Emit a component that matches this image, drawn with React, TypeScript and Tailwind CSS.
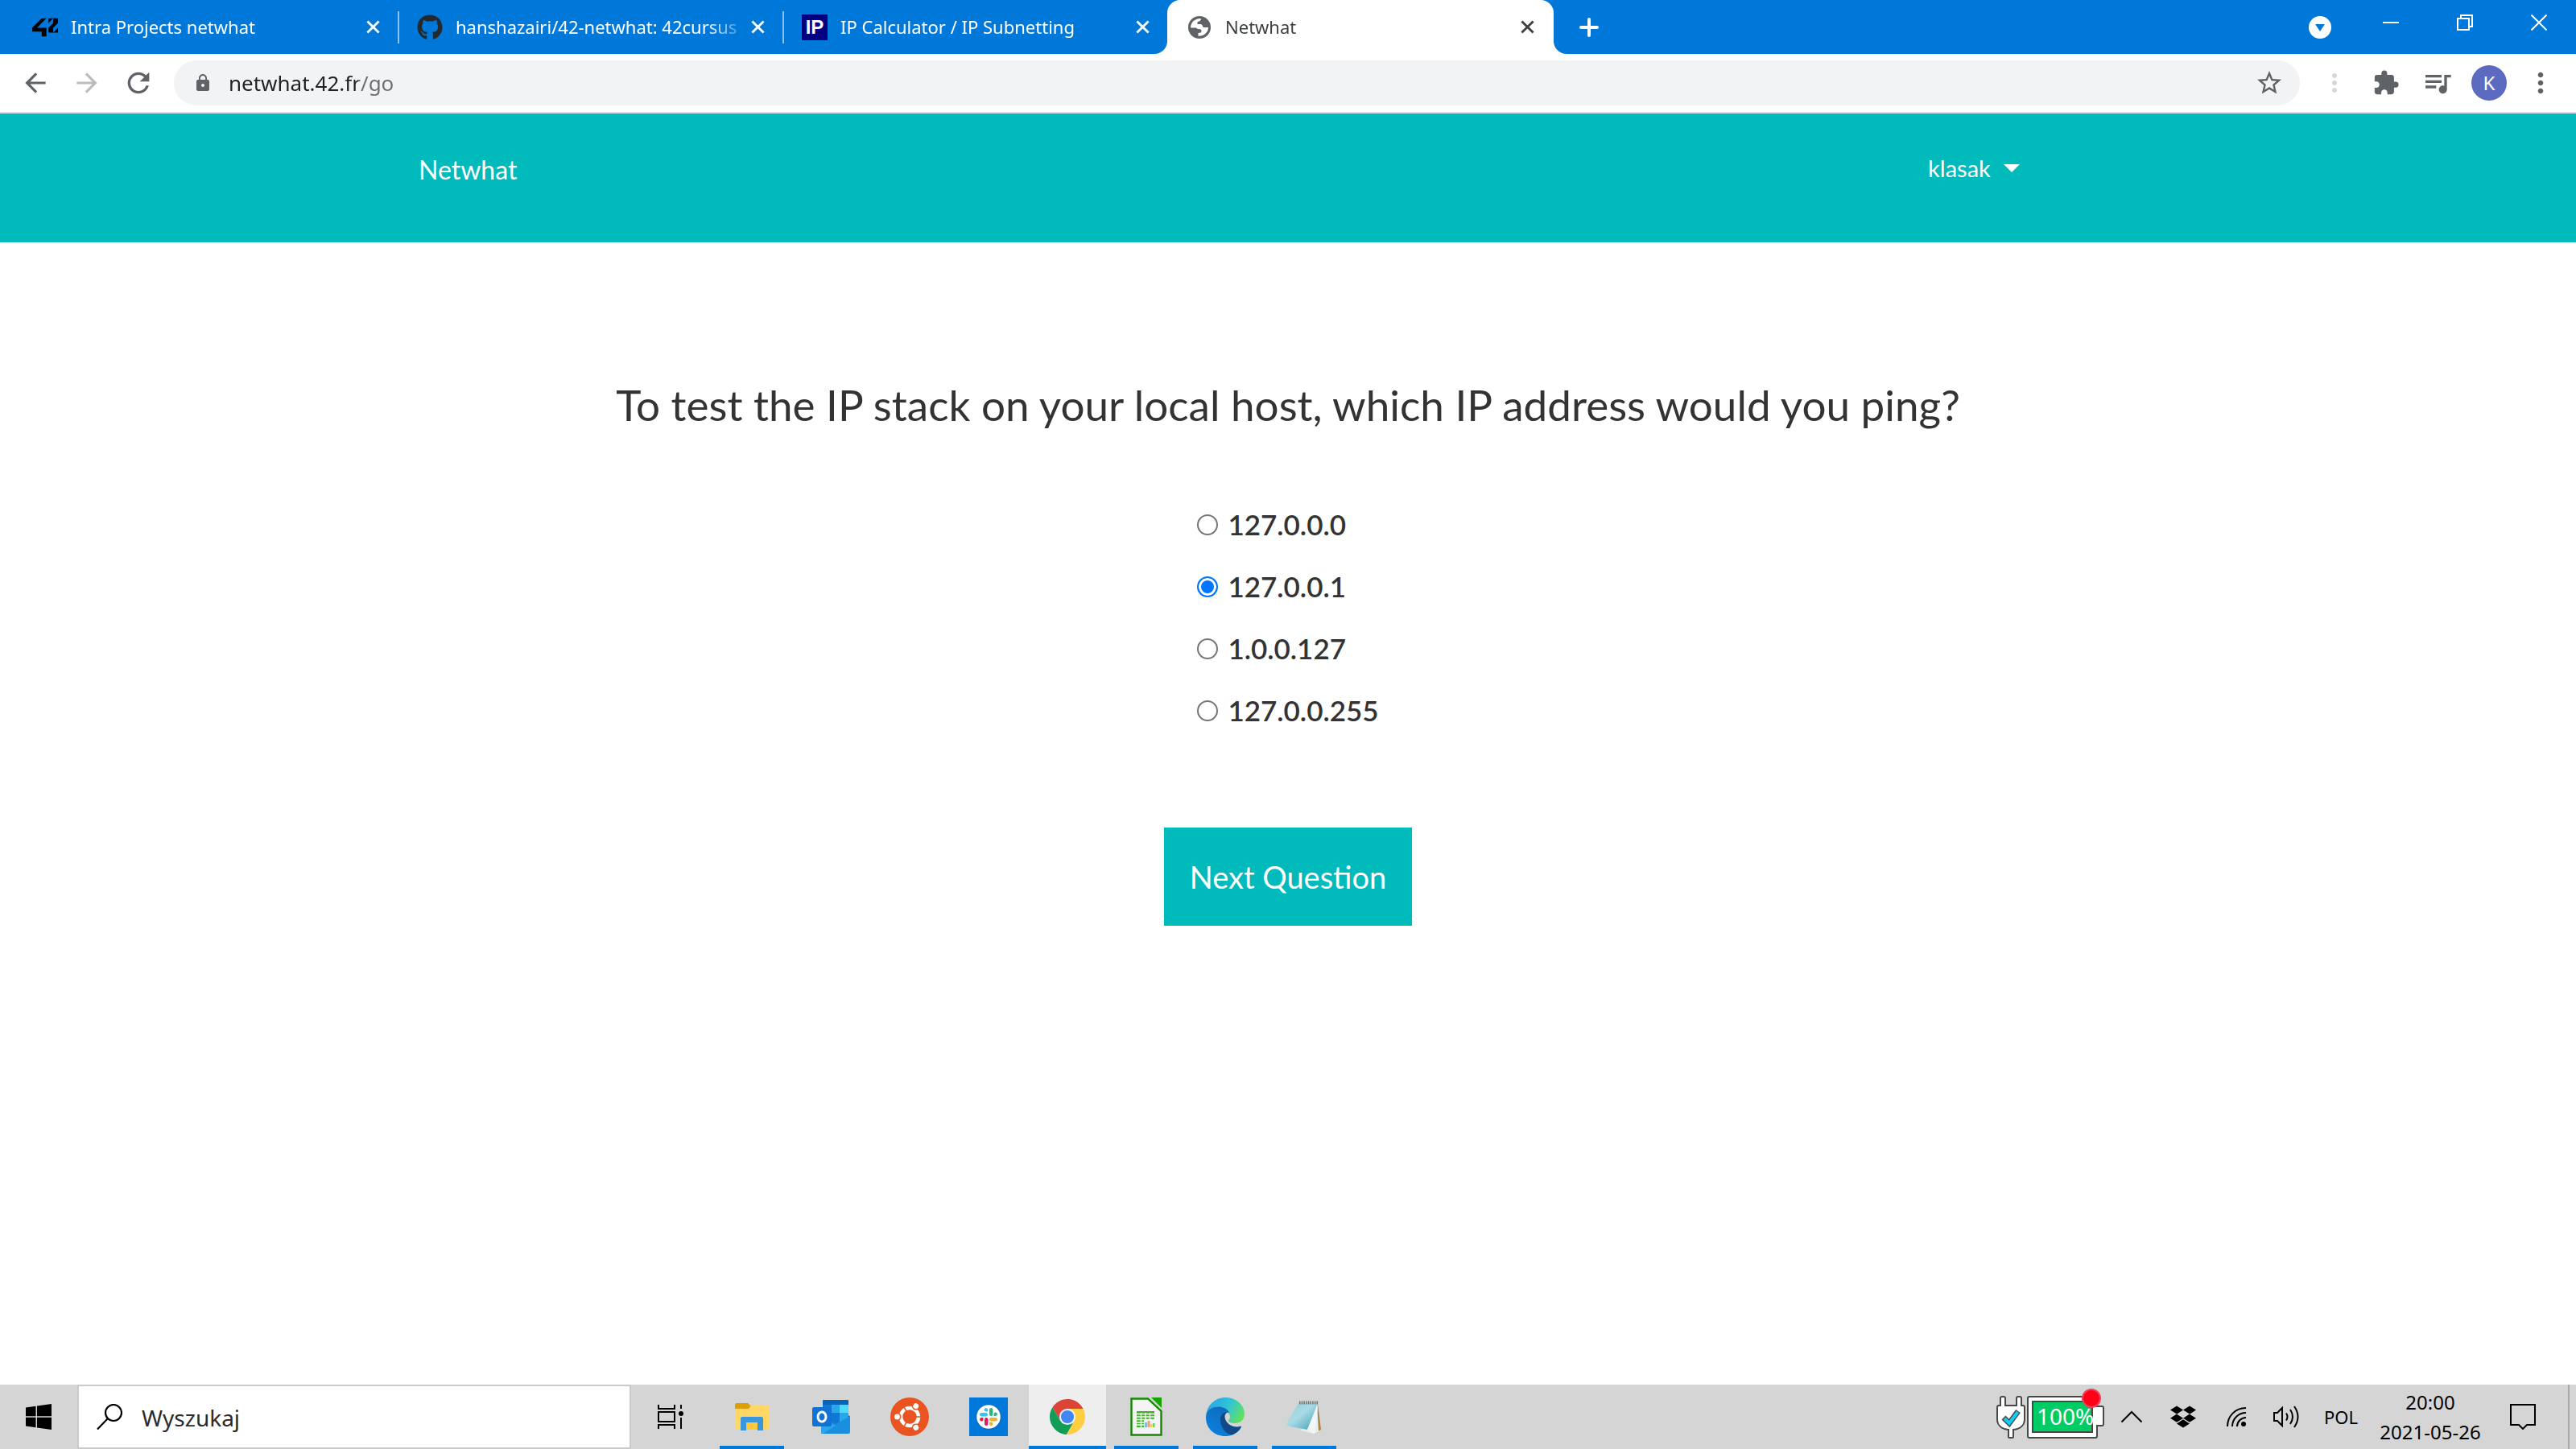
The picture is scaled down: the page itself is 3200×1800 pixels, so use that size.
import { useState, type ReactNode } from "react";
import {
  MdArrowBack,
  MdArrowForward,
  MdExtension,
  MdLock,
  MdMoreVert,
  MdQueueMusic,
  MdRefresh,
  MdStarBorder,
} from "react-icons/md";
import { FaDropbox, FaGithub } from "react-icons/fa";

const CrossIcon = ({ className }: { className: string }) => (
  <svg viewBox="0 0 18 18" className={className} fill="none" stroke="currentColor" strokeWidth="3">
    <path d="M1.5 1.5l15 15M16.5 1.5l-15 15" />
  </svg>
);

const Logo42 = () => (
  <svg viewBox="0 0 24 24" className="size-8 shrink-0" fill="#000">
    <path d="M19.581 16.851H24v-4.439ZM24 3.574h-4.419v4.42l-4.419 4.418v4.44h4.419v-4.44L24 7.993Zm-4.419 0h-4.419v4.42zm-6.324 8.838H4.419l8.838-8.838H8.838L0 12.412v3.595h8.838v4.42h4.419z" />
  </svg>
);

const IpBadge = () => (
  <span className="flex size-8 shrink-0 items-center justify-center bg-[#000080] font-['Liberation_Sans'] text-[24px] font-bold text-white">
    IP
  </span>
);

const GlobeIcon = () => (
  <svg viewBox="0 0 32 32" className="size-8 shrink-0">
    <circle cx="16" cy="16" r="14" fill="#5f6368" />
    <path
      d="M5 16.500C5 10 10 5 17 5c1.500 0 1 2-.5 3-1 .8-3 .5-3 1.800V12h4c2.500 0 2 3 3.500 4h6c0 6-5 11-12.500 10.800V23c3 0 4-.8 4-2.500s-1-2.500-4-2.500c-2 0-1.500-1.500-3-1.500Z"
      fill="#fff"
    />
  </svg>
);

type TabProps = { icon: ReactNode; title: string; active?: boolean; separator?: boolean };

function Tab({ icon, title, active, separator }: TabProps) {
  return (
    <div
      className={
        active
          ? "relative flex h-[67px] w-[480px] items-center rounded-t-2xl bg-white pr-6 pl-6 text-[#3c4043]"
          : "relative flex h-[67px] w-[478px] items-center pr-[22px] pl-6 text-white"
      }
    >
      {active && (
        <>
          <svg viewBox="0 0 16 16" className="absolute bottom-0 -left-4 size-4" fill="#fff">
            <path d="M16 0v16H0A16 16 0 0 0 16 0Z" />
          </svg>
          <svg viewBox="0 0 16 16" className="absolute -right-4 bottom-0 size-4" fill="#fff">
            <path d="M0 0v16h16A16 16 0 0 1 0 0Z" />
          </svg>
        </>
      )}
      {icon}
      <button
        role="tab"
        aria-selected={!!active}
        className="ml-4 flex-1 [mask-image:linear-gradient(90deg,#000_310px,transparent_365px)] pb-0.5 text-left text-[22px] leading-8 whitespace-nowrap"
      >
        {title}
      </button>
      <button aria-label={`Close ${title}`} className="ml-3">
        <CrossIcon className="size-[17px]" />
      </button>
      {separator && <span className="absolute top-[14px] -right-0.5 h-10 w-0.5 bg-[#8cc3f0]" />}
    </div>
  );
}

function TabStrip() {
  return (
    <div className="flex h-[67px] bg-[#0078d9] pl-4 text-white">
      <div role="tablist" className="flex">
        <Tab icon={<Logo42 />} title="Intra Projects netwhat" separator />
        <Tab icon={<FaGithub className="size-8 shrink-0 text-[#24292e]" />} title="hanshazairi/42-netwhat: 42cursus" separator />
        <Tab icon={<IpBadge />} title="IP Calculator / IP Subnetting" />
        <Tab icon={<GlobeIcon />} title="Netwhat" active />
      </div>
      <button aria-label="New tab" className="ml-8 self-center">
        <svg viewBox="0 0 24 24" className="size-6" stroke="currentColor" strokeWidth="4" strokeLinecap="round">
          <path d="M12 2v20M2 12h20" />
        </svg>
      </button>
      <button aria-label="Search tabs" className="mr-7 ml-auto self-center">
        <svg viewBox="0 0 28 28" className="size-7">
          <circle cx="14" cy="14" r="14" fill="#fff" />
          <path d="M8 10h12l-6 9Z" fill="#0078d9" />
        </svg>
      </button>
      <div className="flex h-14">
        <button aria-label="Minimize" className="flex w-[92px] items-center justify-center">
          <span className="h-0.5 w-5 bg-white" />
        </button>
        <button aria-label="Restore" className="flex w-[92px] items-center justify-center">
          <svg viewBox="0 0 20 20" className="size-5" fill="none" stroke="currentColor" strokeWidth="2">
            <path d="M1 5h14v14H1ZM5 5V1h14v14h-4" />
          </svg>
        </button>
        <button aria-label="Close" className="flex w-[92px] items-center justify-center">
          <svg viewBox="0 0 20 20" className="size-5" fill="none" stroke="currentColor" strokeWidth="2">
            <path d="M.5.5l19 19M19.5.5l-19 19" />
          </svg>
        </button>
      </div>
    </div>
  );
}

const ToolButton = ({ label, children }: { label: string; children: ReactNode }) => (
  <button aria-label={label} className="flex h-16 w-16 items-center justify-center text-[#5f6368]">
    {children}
  </button>
);

function Toolbar() {
  return (
    <div className="flex h-[74px] items-center border-b-2 border-[#d5dce3] bg-white px-3">
      <ToolButton label="Back">
        <MdArrowBack className="size-[38px]" />
      </ToolButton>
      <ToolButton label="Forward">
        <MdArrowForward className="size-[38px] text-[#babcbe]" />
      </ToolButton>
      <ToolButton label="Reload">
        <MdRefresh className="size-10" />
      </ToolButton>
      <div className="mr-[11px] ml-3 flex h-14 flex-1 items-center rounded-full bg-[#f1f3f4] pr-5 pl-6">
        <MdLock className="size-6 text-[#5f6368]" />
        <input
          aria-label="Address"
          defaultValue="netwhat.42.fr/go"
          className="ml-5 flex-1 bg-[linear-gradient(90deg,#202124_161px,#6b6f73_161px)] bg-clip-text text-[26px] leading-10 text-transparent outline-none"
        />
        <button aria-label="Bookmark this page" className="text-[#5f6368]">
          <MdStarBorder className="size-9" />
        </button>
      </div>
      <span className="flex h-16 w-16 items-center justify-center text-[#d4d6d8]">
        <MdMoreVert className="size-9" />
      </span>
      <ToolButton label="Extensions">
        <MdExtension className="size-[34px]" />
      </ToolButton>
      <ToolButton label="Media controls">
        <MdQueueMusic className="size-10" />
      </ToolButton>
      <ToolButton label="Profile">
        <span className="flex size-11 items-center justify-center rounded-full bg-[#5c6bc0] text-[24px] leading-none text-white">
          K
        </span>
      </ToolButton>
      <ToolButton label="Menu">
        <MdMoreVert className="size-10" />
      </ToolButton>
    </div>
  );
}

const ANSWERS = ["127.0.0.0", "127.0.0.1", "1.0.0.127", "127.0.0.255"];

function Quiz() {
  const [answer, setAnswer] = useState("127.0.0.1");
  return (
    <div className="flex flex-1 flex-col bg-white font-['Lato','Open_Sans',sans-serif] text-[#333]">
      <nav className="flex h-40 items-center justify-between bg-[#00babc] pr-[21.6%] pb-5 pl-[16.25%] text-white">
        <a href="#home" className="text-[32px] leading-10">
          Netwhat
        </a>
        <button className="mb-1 flex items-center text-[29px] leading-10">
          klasak
          <svg viewBox="0 0 20 10" className="ml-4 h-2.5 w-5" fill="currentColor">
            <path d="M0 0h20L10 10Z" />
          </svg>
        </button>
      </nav>
      <form className="flex flex-col items-center pt-[170px]" onSubmit={(e) => e.preventDefault()}>
        <h1 className="text-center text-[53px] leading-16">
          To test the IP stack on your local host, which IP address would you ping?
        </h1>
        <div role="radiogroup" className="mt-[78px]">
          {ANSWERS.map((a) => (
            <label key={a} className="flex h-[77px] items-center text-[35px] leading-none font-semibold">
              <input
                type="radio"
                name="answer"
                checked={answer === a}
                onChange={() => setAnswer(a)}
                className="mr-3 size-[26px] appearance-none rounded-full border-2 border-[#767676] bg-white checked:border-[#0075ff] checked:bg-[#0075ff] checked:shadow-[inset_0_0_0_3px_#fff]"
              />
              {a}
            </label>
          ))}
        </div>
        <button type="submit" className="mt-[107px] h-[122px] w-[308px] bg-[#00babc] text-[38px] text-white">
          Next Question
        </button>
      </form>
    </div>
  );
}

const ExplorerIcon = () => (
  <svg viewBox="0 0 48 48" className="size-12">
    <path d="M3 9a2 2 0 0 1 2-2h14l4 4v4H3Z" fill="#dea000" />
    <path d="M3 14h17l3-4h20a2 2 0 0 1 2 2v26a2 2 0 0 1-2 2H5a2 2 0 0 1-2-2Z" fill="#ffd664" />
    <path d="M17 30h14v10H17Z" fill="#ffc93c" />
    <path d="M12 24h24a2 2 0 0 1 2 2v15h-7V31H17v10h-7V26a2 2 0 0 1 2-2Z" fill="#3a96dd" />
  </svg>
);

const OutlookIcon = () => (
  <svg viewBox="0 0 48 48" className="size-12">
    <path d="M14 4a1 1 0 0 1 1-1h30a1 1 0 0 1 1 1v5H14Z" fill="#0364b8" />
    <path d="M14 9h11v10H14Z" fill="#0f78d4" />
    <path d="M25 9h10v10H25Z" fill="#28a8ea" />
    <path d="M35 9h11v10H35Z" fill="#50d9ff" />
    <path d="M14 19h11v14H14Z" fill="#064a8c" />
    <path d="M25 19h10v14H25Z" fill="#0f78d4" />
    <path d="M35 19h11v14H35Z" fill="#28a8ea" />
    <path d="M46 22l2 2-2 4Z" fill="#123b6d" />
    <path d="M12 25l18 8 18-10v20a2 2 0 0 1-2 2H14a2 2 0 0 1-2-2Z" fill="#1a8fe0" />
    <path d="M12 26l18 9L14 45a2 2 0 0 1-2-2Z" fill="#2ba6ea" />
    <rect x="1" y="12" width="24" height="24" rx="2" fill="#1272d3" />
    <ellipse cx="13" cy="24" rx="5" ry="6" fill="none" stroke="#fff" strokeWidth="3" />
  </svg>
);

const UbuntuIcon = () => (
  <svg viewBox="0 0 48 48" className="size-12">
    <circle cx="24" cy="24" r="24" fill="#e95420" />
    <circle cx="24" cy="24" r="11" fill="none" stroke="#fff" strokeWidth="4.5" />
    {["rotate(0 24 24)", "rotate(120 24 24)", "rotate(240 24 24)"].map((t) => (
      <g key={t} transform={t}>
        <path d="M32 24h6" stroke="#e95420" strokeWidth="1.6" />
        <circle cx="8.5" cy="24" r="5" fill="#e95420" />
        <circle cx="8.5" cy="24" r="3.4" fill="#fff" />
      </g>
    ))}
  </svg>
);

const SlackIcon = () => (
  <svg viewBox="0 0 48 48" className="size-12">
    <path d="M0 0h48v48H0Z" fill="#0078d9" />
    <circle cx="24" cy="24" r="15.5" fill="#0b4f8f" opacity=".5" />
    <circle cx="24" cy="24" r="14.8" fill="#fff" />
    <g fill="#36c5f0">
      <rect x="13" y="19" width="10" height="4.4" rx="2.2" />
      <path d="M23 17.5h-2.200a2.200 2.200 0 1 1 2.200-2.200Z" />
    </g>
    <g fill="#2eb67d">
      <rect x="25" y="13" width="4.4" height="10" rx="2.2" />
      <path d="M30.500 23v-2.200a2.200 2.200 0 1 1 2.200 2.200Z" />
    </g>
    <g fill="#ecb22e">
      <rect x="25" y="25" width="10" height="4.4" rx="2.2" />
      <path d="M25 30.500h2.200a2.200 2.200 0 1 1-2.200 2.200Z" />
    </g>
    <g fill="#e01e5a">
      <rect x="19" y="25" width="4.4" height="10" rx="2.2" />
      <path d="M17.500 25v2.200a2.200 2.200 0 1 1-2.200-2.200Z" />
    </g>
  </svg>
);

const ChromeIcon = () => (
  <svg viewBox="0 0 48 48" className="size-11">
    <path d="M24 24V13h21.300A24 24 0 0 0 3.800 11.050L14.500 29.500Z" fill="#db4437" />
    <path d="M24 24L14.500 29.500 3.800 11.050A24 24 0 0 0 22.900 47.950L33.500 29.500Z" fill="#0f9d58" />
    <path d="M24 24L33.500 29.500 22.900 47.950A24 24 0 0 0 45.300 13H24Z" fill="#ffcd40" />
    <circle cx="24" cy="24" r="11" fill="#f1f1f1" />
    <circle cx="24" cy="24" r="8.8" fill="#4285f4" />
  </svg>
);

const CalcIcon = () => (
  <svg viewBox="0 0 40 48" className="h-12 w-10">
    <path d="M1.500 1.500H22L38.500 17v29.500h-37Z" fill="#f4f4f4" stroke="#148a00" strokeWidth="2.4" />
    <path d="M26 0h13v13Z" fill="#18a303" />
    <path d="M8 17h22v20H8Z" fill="#43b02e" />
    <g stroke="#f0fbee" strokeWidth="1.4">
      <path d="M8 20.500h22M8 24h22M8 27.500h22M8 31h22M8 34h22M13.500 19v18M19 19v18M24.500 19v18" />
    </g>
    <path d="M17 28h14v9H17Z" fill="#f2f5f8" />
    <path d="M18 31h3v6h-3Z" fill="#7fb9ea" />
    <path d="M21.500 29h3v8h-3Z" fill="#ff9a6a" />
    <path d="M25 33h2.500v4H25Z" fill="#f5d24c" />
    <path d="M28 32h2.500v5H28Z" fill="#7bd05f" />
  </svg>
);

const EdgeIcon = () => (
  <svg viewBox="0 0 48 48" className="size-12">
    <defs>
      <linearGradient id="edgeTop" x1="0" y1=".3" x2="1" y2=".7">
        <stop offset="0" stopColor="#2aa5e8" />
        <stop offset=".5" stopColor="#30c4d6" />
        <stop offset="1" stopColor="#66e356" />
      </linearGradient>
      <linearGradient id="edgeLeft" x1="0" y1="1" x2=".6" y2="0">
        <stop offset="0" stopColor="#0a84e0" />
        <stop offset="1" stopColor="#0f6cbd" />
      </linearGradient>
    </defs>
    <path
      d="M.5 21C2 9 12 0 24 0c14 0 24 10 24 20 0 8-5 12-12 12-5 0-8-1.500-8-3 0-1 2-2 2-5 0-5-6-10-14-12C9 11 3 14 .5 21Z"
      fill="url(#edgeTop)"
    />
    <path
      d="M0 25C0 16 6 11.500 15 11.500c7 0 12 3 14 7.500-5-1-9 3-9 9 0 9 6 17 13 18.500-3 1-6 1.500-9 1.500C10 48 0 38 0 25Z"
      fill="url(#edgeLeft)"
    />
    <path
      d="M18 27c0-5 3-8.500 9-8.800-2.500 1.300-3.500 3.300-3.500 5.800C24 32 33 38 42 36c1.500-.4 2.500-.6 2 .5-2.300 4.500-6 8-11 10C24 46 18 36 18 27Z"
      fill="#114a8b"
    />
  </svg>
);

const NotepadIcon = () => (
  <svg viewBox="0 0 48 48" className="size-12">
    <defs>
      <linearGradient id="pad" x1="0" y1="0" x2="1" y2="1">
        <stop offset="0" stopColor="#8fcbd9" />
        <stop offset=".45" stopColor="#a9dbe6" />
        <stop offset="1" stopColor="#3f9db5" />
      </linearGradient>
    </defs>
    <path d="M41 8l4 32-6 3Z" fill="#a98443" />
    <path d="M40 8l2 34-6 3-16-4Z" fill="#e8eef0" />
    <path d="M17 7h24L28 40 1 35Z" fill="url(#pad)" />
    <path d="M41 10L28 40l9 5Z" fill="#f3f6f7" />
    <path d="M18 6.500h24" stroke="#6d767a" strokeWidth="4" strokeDasharray="1.5 1.2" />
  </svg>
);

type AppProps = { label: string; open?: boolean; active?: boolean; children: ReactNode };

function TaskbarApp({ label, open, active, children }: AppProps) {
  return (
    <button aria-label={label} className="flex h-20 w-[98px] items-stretch justify-center">
      <span
        className={
          active
            ? "flex w-24 items-center justify-center border-b-4 border-[#0078d9] bg-[#eee] pt-1"
            : open
              ? "flex w-20 items-center justify-center border-b-4 border-[#0078d9] pt-1"
              : "flex w-20 items-center justify-center"
        }
      >
        {children}
      </span>
    </button>
  );
}

const BatteryMeter = () => (
  <span className="relative block h-[60px] w-[140px]">
    <svg viewBox="0 0 140 60" className="h-[60px] w-[140px]">
      <g fill="#fff" stroke="#484848" strokeWidth="2">
        <path d="M15 55v-9C6 45 1 40 1 33V18q0-2 2-2h2V7q0-2 2-2h2q2 0 2 2v9h14V7q0-2 2-2h2q2 0 2 2v9h2q2 0 2 2v15c0 7-5 12-14 13v9q0 1-1 1h-4q-1 0-1-1Z" />
        <path d="M41 5h80q2 0 2 2v10h8q2 0 2 2v20q0 2-2 2h-6v13q0 2-2 2H41q-2 0-2-2V7q0-2 2-2Z" />
      </g>
      <path d="M45 11h74v38H45Z" fill="#00cc66" stroke="#484848" strokeWidth="2" />
      <path d="M9 31l7 7 11-15" fill="none" stroke="#484848" strokeWidth="7" />
      <path d="M10 32l6 6 10.500-14" fill="none" stroke="#12cdf5" strokeWidth="4" />
    </svg>
    <span className="absolute top-[13px] left-[50px] text-[28px] leading-8 text-white">100%</span>
    <span className="absolute -top-[5px] left-[106px] size-6 rounded-full border-2 border-[#f0405a] bg-[#ff0018]" />
  </span>
);

function Taskbar() {
  return (
    <footer className="flex h-20 items-stretch bg-[#d5d5d5] text-black">
      <button aria-label="Start" className="flex w-24 items-center justify-center">
        <svg viewBox="0 0 32 32" className="size-8">
          <path d="M0 4.500L12.500 2.700V15.300H0ZM14 2.500L32 0V15.300H14ZM0 16.700H12.500V29.300L0 27.500ZM14 16.700H32V32L14 29.500Z" />
        </svg>
      </button>
      <label className="flex w-[688px] items-center border-2 border-[#cacaca] bg-white pl-[22px]">
        <svg viewBox="0 0 32 32" className="size-8" fill="none" stroke="#000" strokeWidth="2.2">
          <circle cx="21" cy="11" r="10" />
          <path d="M14 18L1 31.500" />
        </svg>
        <input
          aria-label="Wyszukaj"
          placeholder="Wyszukaj"
          className="ml-6 min-w-0 flex-1 pt-0.5 text-[28px] leading-10 outline-none placeholder:text-[#2b2b2b]"
        />
      </label>
      <TaskbarApp label="Task view">
        <svg viewBox="0 0 32 30" className="h-[30px] w-8" fill="none" stroke="#000" strokeWidth="2">
          <path d="M1 0v5h20V0M1 9h20v12H1ZM1 30v-5h20v5M29 0v5M29 16v14" />
          <circle cx="29" cy="11" r="3" fill="#000" stroke="none" />
        </svg>
      </TaskbarApp>
      <div className="ml-[3px] flex">
        <TaskbarApp label="File Explorer" open>
          <ExplorerIcon />
        </TaskbarApp>
        <TaskbarApp label="Outlook">
          <OutlookIcon />
        </TaskbarApp>
        <TaskbarApp label="Ubuntu">
          <UbuntuIcon />
        </TaskbarApp>
        <TaskbarApp label="Slack">
          <SlackIcon />
        </TaskbarApp>
        <TaskbarApp label="Chrome" active>
          <ChromeIcon />
        </TaskbarApp>
        <TaskbarApp label="LibreOffice Calc" open>
          <CalcIcon />
        </TaskbarApp>
        <TaskbarApp label="Edge" open>
          <EdgeIcon />
        </TaskbarApp>
        <TaskbarApp label="Notepad" open>
          <NotepadIcon />
        </TaskbarApp>
      </div>
      <div className="ml-auto flex items-center text-[24px]">
        <BatteryMeter />
        <button aria-label="Hidden icons" className="flex w-14 justify-center">
          <svg viewBox="0 0 28 16" className="h-4 w-7" fill="none" stroke="#000" strokeWidth="2">
            <path d="M1.500 14.500L14 2l12.500 12.500" />
          </svg>
        </button>
        <button aria-label="Dropbox" className="flex w-[72px] justify-center">
          <FaDropbox className="size-8" />
        </button>
        <button aria-label="Network" className="flex w-[60px] justify-center">
          <svg viewBox="0 0 24 24" className="size-6" fill="none" stroke="#000" strokeWidth="2">
            <path d="M1 24C1 11 11 1 24 1M7 24C7 14.500 14.500 7 24 7M13 24c0-6 5-11 11-11" />
            <circle cx="21" cy="21" r="3" fill="#000" stroke="none" />
          </svg>
        </button>
        <button aria-label="Volume" className="flex w-16 justify-center">
          <svg viewBox="0 0 32 28" className="h-7 w-8" fill="none" stroke="#000" strokeWidth="2">
            <path d="M1 9h4l6-6v22l-6-6H1ZM16 9.500q3 4.500 0 9M21 5q6 9 0 18M26 1q9 13 0 26" />
          </svg>
        </button>
        <button className="w-[72px] text-center text-[22px] leading-8">POL</button>
        <button className="w-[150px] text-center leading-[37px]">
          20:00
          <br />
          2021-05-26
        </button>
        <button aria-label="Notifications" className="flex w-20 justify-center">
          <svg viewBox="0 0 32 32" className="size-8" fill="none" stroke="#000" strokeWidth="2">
            <path d="M1 1h30v25H21l-5 5-5-5H1Z" />
          </svg>
        </button>
        <button aria-label="Show desktop" className="ml-4 h-20 w-2.5 border-l-2 border-[#a9a9a9]" />
      </div>
    </footer>
  );
}

export default function App() {
  return (
    <div className="flex min-h-screen flex-col bg-white font-['Noto_Sans','Open_Sans',sans-serif]">
      <TabStrip />
      <Toolbar />
      <Quiz />
      <Taskbar />
    </div>
  );
}
